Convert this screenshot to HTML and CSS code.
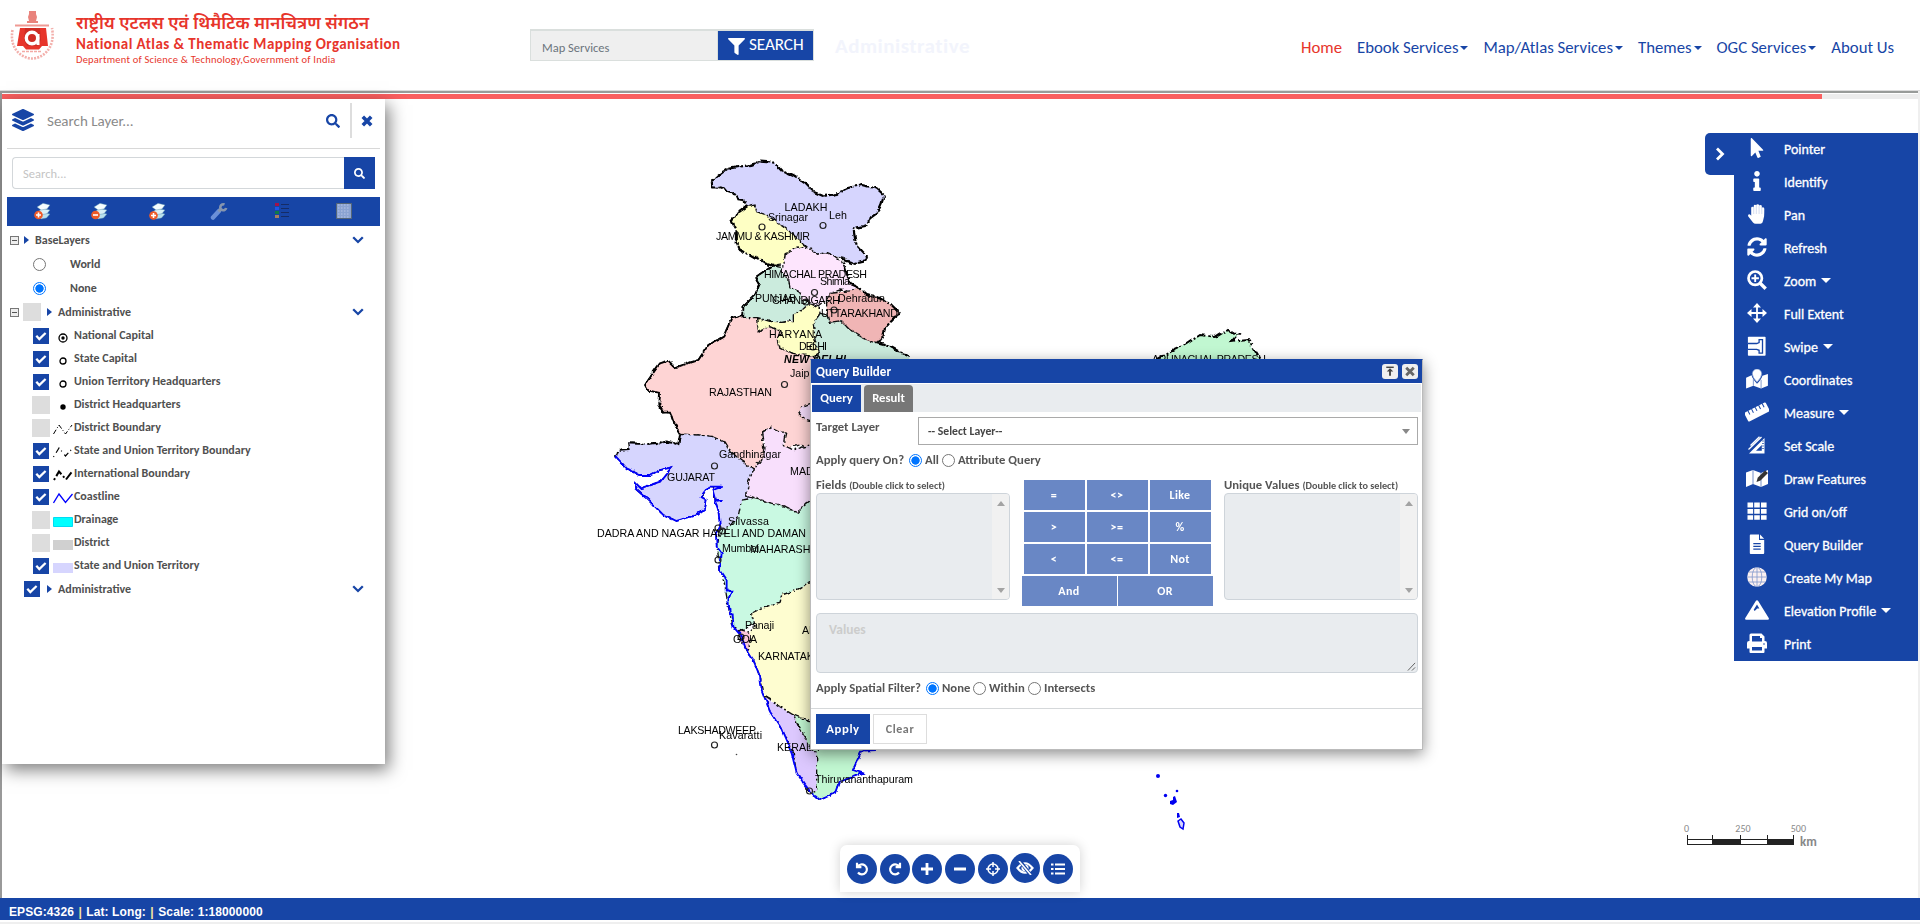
FILE: index.html
```html
<!DOCTYPE html>
<html lang="en">
<head>
<meta charset="utf-8">
<title>National Atlas &amp; Thematic Mapping Organisation</title>
<link rel="stylesheet" href="styles.css">
</head>
<body>
<svg class="defs" aria-hidden="true">
  <symbol id="i-search" viewBox="0 0 512 512"><path d="M505 442.7L405.3 343c-4.5-4.5-10.6-7-17-7H372c27.6-35.3 44-79.7 44-128C416 93.1 322.9 0 208 0S0 93.1 0 208s93.1 208 208 208c48.3 0 92.7-16.4 128-44v16.3c0 6.4 2.5 12.5 7 17l99.7 99.7c9.4 9.4 24.6 9.4 33.9 0l28.3-28.3c9.4-9.4 9.4-24.6.1-34zM208 336c-70.7 0-128-57.2-128-128 0-70.7 57.2-128 128-128 70.7 0 128 57.2 128 128 0 70.7-57.2 128-128 128z"/></symbol>
  <symbol id="i-filter" viewBox="0 0 512 512"><path d="M487.976 0H24.028C2.71 0-8.047 25.866 7.058 40.971L192 225.941V432c0 7.831 3.821 15.17 10.237 19.662l80 55.98C298.02 518.69 320 507.493 320 487.98V225.941l184.947-184.97C520.021 25.896 509.338 0 487.976 0z"/></symbol>
  <symbol id="i-layers" viewBox="0 0 512 512"><path d="M12.41 148.02l232.94 105.67c6.8 3.09 14.49 3.09 21.29 0l232.94-105.67c16.55-7.51 16.55-32.52 0-40.03L266.65 2.31a25.607 25.607 0 0 0-21.29 0L12.41 107.98c-16.55 7.51-16.55 32.53 0 40.04zm487.18 88.28l-58.09-26.33-161.64 73.27c-7.56 3.43-15.59 5.17-23.86 5.17s-16.29-1.74-23.86-5.17L70.51 209.97l-58.1 26.33c-16.55 7.5-16.55 32.5 0 40l232.94 105.59c6.8 3.08 14.49 3.08 21.29 0L499.59 276.3c16.55-7.5 16.55-32.5 0-40zm0 127.8l-57.87-26.23-161.86 73.37c-7.56 3.43-15.59 5.17-23.86 5.17s-16.29-1.74-23.86-5.17L70.29 337.87 12.41 364.1c-16.55 7.5-16.55 32.5 0 40l232.94 105.59c6.8 3.08 14.49 3.08 21.29 0L499.59 404.1c16.55-7.5 16.55-32.5 0-40z"/></symbol>
  <symbol id="i-pointer" viewBox="-96 0 512 512"><path d="M302.189 329.126H196.105l55.831 135.993c3.889 9.428-.555 19.999-9.444 23.999l-49.165 21.427c-9.165 4-19.443-.571-23.332-9.714l-53.053-129.136-86.664 89.138C18.729 472.71 0 463.554 0 447.977V18.299C0 1.899 19.921-6.096 30.277 5.443l284.412 292.542c11.472 11.179 3.007 31.141-12.5 31.141z"/></symbol>
  <symbol id="i-info" viewBox="-160 0 512 512"><path d="M20 424.229h20V279.771H20c-11.046 0-20-8.954-20-20V212c0-11.046 8.954-20 20-20h112c11.046 0 20 8.954 20 20v212.229h20c11.046 0 20 8.954 20 20V492c0 11.046-8.954 20-20 20H20c-11.046 0-20-8.954-20-20v-47.771c0-11.046 8.954-20 20-20zM96 0C56.235 0 24 32.235 24 72s32.235 72 72 72 72-32.235 72-72S135.764 0 96 0z"/></symbol>
  <symbol id="i-hand" viewBox="0 0 20 20"><path d="M4.2 4q0-1.3 1.2-1.3T6.7 4V2.2Q6.7.8 8 .8q1 0 1.2.7Q9.300 .2 10.700 .2 12 .2 12.200 1.500 12.600 .900 13.500 .900q1.300 0 1.300 1.400v1.500q.4-.5 1.200-.500 1.300.1 1.300 1.400 0 5-.2 7.500L16 17q-.5 2.800-2.500 2.800H8.700Q7 19.800 6 18.400L1.300 12.500Q.6 11.400 1.500 10.600q1-.7 1.900.2l.8.900z"/><path d="M6.700 4v6M9.300 2v8M12.100 2v8M14.800 3.500V10" stroke="#b7c6e6" stroke-width=".6"/></symbol>
  <symbol id="i-sync" viewBox="0 0 512 512"><path d="M370.72 133.28C339.458 104.008 298.888 87.962 255.848 88c-77.458.068-144.328 53.178-162.791 126.85-1.344 5.363-6.122 9.15-11.651 9.15H24.103c-7.498 0-13.194-6.807-11.807-14.176C33.933 94.924 134.813 8 256 8c66.448 0 126.791 26.136 171.315 68.685L463.03 40.97C478.149 25.851 504 36.559 504 57.941V192c0 13.255-10.745 24-24 24H345.941c-21.382 0-32.09-25.851-16.971-40.971l41.75-41.749zM32 296h134.059c21.382 0 32.09 25.851 16.971 40.971l-41.75 41.75c31.262 29.273 71.835 45.319 114.876 45.28 77.418-.07 144.315-53.144 162.787-126.849 1.344-5.363 6.122-9.15 11.651-9.15h57.304c7.498 0 13.194 6.807 11.807 14.176C478.067 417.076 377.187 504 256 504c-66.448 0-126.791-26.136-171.315-68.685L48.97 471.03C33.851 486.149 8 475.441 8 454.059V320c0-13.255 10.745-24 24-24z"/></symbol>
  <symbol id="i-zoom" viewBox="0 0 20 20"><g fill="none" stroke="#fff"><circle cx="8.200" cy="8.200" r="6.700" stroke-width="2.700"/><path d="M13.200 13.200l5.500 5.500" stroke-width="3.400"/><path d="M8.200 4.500v7.400M4.500 8.200h7.400" stroke-width="1.900"/></g></symbol>
  <symbol id="i-move" viewBox="0 0 20 20"><path d="M10 0l4 4.500h-3.100v4.600h4.600V6L20 10l-4.500 4v-3.100h-4.600v4.600H14L10 20l-4-4.500h3.100v-4.600H4.500V14L0 10l4.500-4v3.100h4.600V4.500H6z"/></symbol>
  <symbol id="i-swipe" viewBox="0 0 20 20"><rect x=".9" y=".8" width="17.700" height="19" rx=".8"/><path d="M.5 7.500h9.200l2.400-1V3.700h3.400v13.400h-3.400v-2.800l-2.400-1H.5" fill="#fff" stroke="#1745a6" stroke-width="1.300"/><path d="M0 7.500v6" stroke="#1745a6" stroke-width="2"/></symbol>
  <symbol id="i-pinmap" viewBox="0 0 24 22"><path d="M0 9.500L6 7q1 4 6 9.300Q17 11.500 18 7.500L24 5.500V18.500L16.500 21.500 8 18.500 0 21.500z"/><path d="M8 11v7.500M16.500 12v9" stroke="#7490c9"/><path d="M12 0a5.200 5.200 0 0 1 5.200 5.200Q17.200 9 12 14.500 6.800 9 6.800 5.200A5.200 5.200 0 0 1 12 0z" stroke="#7490c9" stroke-width=".7"/></symbol>
  <symbol id="i-ruler" viewBox="0 0 24 20"><g transform="rotate(-27 12 10)"><path fill-rule="evenodd" d="M1 5h22q1 0 1 1v8q0 1-1 1H1q-1 0-1-1V6q0-1 1-1zM4 5v4h1V5zm4 0v4h1V5zm4 0v4h1V5zm4 0v4h1V5zm4 0v4h1V5z"/></g></symbol>
  <symbol id="i-setsq" viewBox="0 0 20 20"><path fill-rule="evenodd" d="M17.500 3v15.500H2zM14.800 10v5.800H9z"/><path d="M1.500 14.500L14.500 2M3.500 10.500l9-8.700" stroke="#fff" stroke-width="1.300"/><path d="M17 6h-2M17 8.500h-2M17 11h-2M17 13.500h-2" stroke="#1745a6" stroke-width=".7"/></symbol>
  <symbol id="i-drawmap" viewBox="0 0 24 20"><path d="M1 4.500L8 2l8 3 7-3v14l-7 3-8-3-7 3z"/><path d="M8 2v14M16 5v14" stroke="#7490c9"/><path d="M11.500 14l1.200-4.200L20 2.500l3 2.600-7.500 7.400z" fill="#333"/></symbol>
  <symbol id="i-grid" viewBox="0 0 20 20"><path d="M.5 1.500h5.600v5H.5zM7.200 1.500h5.600v5H7.200zM14 1.500h5.600v5H14zM.5 8h5.600v4.800H.5zM7.200 8h5.600v4.800H7.200zM14 8h5.600v4.800H14zM.5 14.200h5.600v4.600H.5zM7.200 14.200h5.600v4.600H7.200zM14 14.200h5.600v4.600H14z"/></symbol>
  <symbol id="i-file" viewBox="0 0 20 20"><path fill-rule="evenodd" d="M3.500.5H12V6h5.200v13q0 1-.9 1H3.700q-.9 0-.9-1V1.500q0-1 .7-1zM6.300 9v1.200h7.400V9zm0 2.800V13h7.400v-1.200zm0 2.800v1.200h7.400v-1.200z"/><path d="M13 .5l4.200 4.300H13z"/></symbol>
  <symbol id="i-globe" viewBox="0 0 20 20"><circle cx="10" cy="10" r="9.800" fill="#fbf0f0"/><g fill="none" stroke="#8298cc" stroke-width=".8"><ellipse cx="10" cy="10" rx="4.800" ry="9.800"/><path d="M10 0v20M0 10h20M1.500 5h17M1.500 15h17"/></g></symbol>
  <symbol id="i-peak" viewBox="0 0 24 20"><path fill-rule="evenodd" d="M12 .3q.8 0 1.200.8l10.500 17q.8 1.600-1 1.600H1.300q-1.800 0-1-1.600l10.500-17q.4-.8 1.200-.8zM12 4.500L8.700 9.700l1 1.200 2.500-2.400h2.200z"/></symbol>
  <symbol id="i-print" viewBox="0 0 20 20"><path fill-rule="evenodd" d="M2.500 8V2q0-1.500 1.500-1.500h10.500L17.500 3.500V8h.5q2 0 2 2v5.500h-2.500V19q0 1-1 1H3.500q-1 0-1-1v-3.500H0V10q0-2 2-2zM5 3v5.500h10V5h-2V3zM5 14v3.500h10V14z"/><circle cx="17" cy="11" r=".8" fill="#1745a6"/></symbol>
  <symbol id="i-stack" viewBox="0 0 18 18"><g stroke="#4b88a8" stroke-width=".4"><path d="M4 14l5-3.500 7 1.500-3.500 4L7 17z" fill="#b9e0ee"/><path d="M3.500 10l5-3.500 7.500 1.500-3 3.700-5.500 1z" fill="#d9f0f7"/><path d="M3 5L9 1.300l7 1.600-3 4L7 8z" fill="#f6fdfe"/></g></symbol>
  <symbol id="i-chev" viewBox="0 0 12 8"><path d="M1.200 1.300L6 6l4.800-4.700" fill="none" stroke="#1745a6" stroke-width="2.300"/></symbol>
  <symbol id="i-tick" viewBox="0 0 16 16"><path d="M3.300 7.800l3 3.200 6.300-6" fill="none" stroke="#fff" stroke-width="2.300"/></symbol>
</svg>

<header class="top">
  <svg class="emblem" viewBox="0 0 46 52">
    <g fill="#e9837c"><path d="M19 1h7v3l1 3-1 4h2v2H17v-2h2l-1-4 1-3z"/></g>
    <path d="M5 15.500h34" stroke="#ef9a94" stroke-width="2"/>
    <path d="M10 18h26l2 18h-6l-3 3.500H16L13 36H7z" fill="#e7352b"/>
    <path d="M15 18h15l1 12-3 6H17l-3-6z" fill="#cf2c24"/>
    <circle cx="22" cy="28" r="5.700" fill="none" stroke="#fff" stroke-width="3.400"/><path d="M28 24v11" stroke="#fff" stroke-width="3"/>
    <path d="M2.500 20C-1 40 13 48.500 22 48.500S46 40 42 18" fill="none" stroke="#f3b0ac" stroke-width="2.600" stroke-dasharray="2 1.200"/>
    <path d="M12 41.500h20" stroke="#f3aaa5" stroke-width="1.500" stroke-dasharray="3 1"/>
  </svg>
  <div class="brand">
    <div class="brand-hi" lang="hi">राष्ट्रीय एटलस एवं थिमैटिक मानचित्रण संगठन</div>
    <div class="brand-en">National Atlas &amp; Thematic Mapping Organisation</div>
    <div class="brand-sub">Department of Science &amp; Technology,Government of India</div>
  </div>
  <div class="site-search"><span class="site-field">Map Services</span><span class="site-btn"><svg><use href="#i-filter"/></svg>SEARCH</span></div>
  <div class="ticker">Administrative</div>
  <nav class="nav"><a class="on">Home</a><a class="dd">Ebook Services</a><a class="dd">Map/Atlas Services</a><a class="dd">Themes</a><a class="dd">OGC Services</a><a>About Us</a></nav>
</header>

<main class="stage">
  <div class="progress"><div class="progress-fill"></div></div>
  <svg class="map" viewBox="0 0 1920 800">
    <defs><filter id="rough" x="-5%" y="-5%" width="110%" height="110%"><feTurbulence type="fractalNoise" baseFrequency=".11" numOctaves="3" seed="4"/><feDisplacementMap in="SourceGraphic" scale="4.500" xChannelSelector="R" yChannelSelector="G"/></filter></defs>
    <g transform="translate(0 -98)">
    <g filter="url(#rough)">
      <g transform="translate(580 140) scale(.33333)" class="land">
        <path fill="#fed4d4" d="M490 525L530 533 535 575 570 560 605 575 595 600 600 625 640 640 700 650 760 700V940L660 915 610 925 620 880 570 865 545 880 555 950 530 970V985L520 990 480 960 450 930 435 905 400 890 360 885 300 882 280 845 270 815H250L238 795 240 758 205 752 195 735 215 705 240 670 265 662 285 682 355 660 385 615 430 590 455 535z"/>
        <path fill="#cbebdd" d="M720 520L745 525 748 550 785 545 810 570 850 595 893 610 930 620 985 650V700H700L715 640 700 600V550z"/>
        <path fill="#feffc4" d="M690 492L718 505 720 520 700 550 705 600 715 640 700 650 640 640 600 625 595 600 605 575 570 560 535 575 530 535 575 548 640 545V520z"/>
        <path fill="#cbebdd" d="M580 375L605 380V395L625 415 630 440 650 445 668 455 665 480 690 490 670 510 640 522V540L605 547 575 545 530 533 490 532V500L525 465 540 430 528 410z"/>
        <path fill="#fde5fd" d="M615 345L640 328 675 318 712 342 740 338 765 350 785 365 800 400 812 430 828 438 815 455 780 450 750 460 740 480 715 500 690 490 665 475 650 445 630 440 625 415 605 395z"/>
        <path fill="#f0b5b5" d="M750 460L815 452 830 438 860 465 900 475 935 495 958 518 935 540 915 560 910 590 893 610 850 595 810 570 785 545 748 550 740 520V490z"/>
        <path fill="#feffc4" d="M500 200L525 195 530 215 560 225 590 245 620 268 650 290 675 320 640 328 615 345 612 370 580 375 540 362 510 345 475 328 468 300 470 270 455 240 475 218z"/>
        <path fill="#d6d5fe" d="M398 120L440 88 480 80 510 75 540 65 585 68 610 95 640 108 675 130 700 155 730 168 770 162 800 145 845 135 890 145 912 165 905 190 893 218 870 235 855 258 820 265 825 295 830 315 862 350 850 365 822 372 790 355 765 350 740 338 712 342 680 320 650 290 620 268 590 245 560 225 530 215 525 195 500 200 490 180 475 178 470 165 440 155 430 143 400 142z"/>
        <path class="intl" d="M580 375L540 362 510 345 475 328 468 300 470 270 455 240 475 218 500 200 490 180 475 178 470 165 440 155 430 143 400 142 398 120 440 88 480 80 510 75 540 65 585 68 610 95 640 108 675 130 700 155 730 168 770 162 800 145 845 135 890 145 912 165 905 190 893 218 870 235 855 258 820 265 825 295 830 315 862 350 850 365 822 372 790 360 800 400 812 430 830 438 860 465 900 475 935 495 958 518 935 540 915 560 910 590 893 610 930 620 985 650"/>
        <path class="intl solid" d="M580 375L528 410 540 430 525 465 490 500V525L455 535 430 590 385 615 355 660 285 682 265 662 240 670 215 705 195 735 205 752 240 758 238 795 250 815H270L280 845 300 882"/>
        <path fill="#f5dcfb" d="M692 790L665 800 658 825 670 835 700 845"/>
      </g>
      <g transform="translate(580 420) scale(.33333)" class="land">
        <path fill="#f8dffc" d="M548 40L575 20 615 40 610 75 640 90 690 75H740V245H690L650 278 610 258 560 245 500 225 505 185 520 150 550 110 555 85z"/>
        <path fill="#d6d5fe" d="M300 43L360 45 400 50 432 65 450 95 480 120 520 150 505 185 500 225 520 235 485 240 490 265 475 300 450 330 420 330 415 270 405 240 400 200 385 200 365 230 380 240 375 265 350 285 290 303 250 285 210 245 165 205V190L180 205 240 185 275 142 240 150 210 165 180 165 140 145 108 110 115 92 145 90 150 70 200 72 260 65 295 72z"/>
        <path fill="#c9f9e2" d="M485 240L520 235 560 245 610 258 650 278 690 245H730V485H690L650 510 605 525 600 550 560 560 515 580 520 610 490 635 460 620 445 560 435 500 420 450 410 370 420 330 455 315 475 290z"/>
        <path fill="#fefdd0" d="M515 580L560 560 600 550 605 525 650 510 690 485H740V900H690L640 890 600 855 555 830 540 770 520 720 500 690 505 640 525 620z"/>
        <path fill="#fbc6da" d="M475 632L510 640 507 690 485 670z"/>
        <path fill="#c1f7d1" d="M640 885L690 905H780V980L885 993 843 995 819 1050 849 1060 777 1086 765 1119 720 1140 680 1110 700 1000z"/>
        <path fill="#dcc8fe" d="M555 830L600 860 640 885 660 930 680 960 690 985 710 1000V1110L690 1115 650 1060 640 1000 600 920 570 875z"/>
        <path class="intl" d="M300 43L295 72 260 65 200 72 150 70 145 90 115 92 108 110"/>
        <path class="coast" d="M108 110L140 145 180 165 210 165 240 150 275 142 240 185 180 205 165 190V205L210 245 250 285 290 303 350 285 375 265 380 240 362 230 385 200H425L400 210 408 240H425L405 243 415 270 420 320 408 345 410 380 425 400 420 450 440 480 440 512H455L445 540 450 580H458L460 620 485 650 495 680 520 720 540 770 545 810 570 875 600 920 635 1000 650 1060 690 1115 720 1140 765 1119 777 1086 849 1060 819 1050 843 995 885 993"/>
      </g>
      <path fill="#c1f7d1" d="M1155 360L1170 352 1185 345 1200 335 1215 337 1228 329 1238 335 1232 342 1248 340 1262 362z"/>
      <path class="intl full" d="M1155 360L1170 352 1185 345 1200 335 1215 337 1228 329 1238 335 1232 342 1248 340 1262 362"/>
    </g>
    <g fill="#0000f0"><circle cx="1158" cy="776" r="2"/><circle cx="1165.500" cy="795.500" r="1.700"/><circle cx="1177" cy="791" r="1.300"/><path d="M1173 797l2-1 2 6-4 3-3-1 0-3 3-1z"/><path d="M1177 813l2 0 1 4-3 1z"/></g>
    <path d="M1178 821l3-2 3 4-1 6-3-2z" fill="#d6d5fe" stroke="#0000f0" stroke-width="1.500"/>
    <g class="town">
      <circle cx="762" cy="227" r="3"/><circle cx="823" cy="225.500" r="3"/><circle cx="814.500" cy="292.500" r="3"/><circle cx="806" cy="302" r="3"/><circle cx="834" cy="310" r="3"/><circle cx="784.500" cy="384.500" r="3"/><circle cx="714.500" cy="466" r="3"/><circle cx="718" cy="528" r="3"/><circle cx="722.500" cy="531" r="3"/><circle cx="718" cy="560" r="3"/><circle cx="741" cy="637" r="3"/><circle cx="714.500" cy="745" r="3"/><circle cx="809.500" cy="791" r="3"/><circle cx="813" cy="347" r="3" fill="#4652a0"/>
    </g>
    <g class="lbl">
      <text x="784.500" y="211" textLength="43">LADAKH</text><text x="768" y="221" textLength="40">Srinagar</text><text x="829" y="219" textLength="18">Leh</text>
      <text x="716" y="240" textLength="94">JAMMU &amp; KASHMIR</text><text x="764" y="278" textLength="103">HIMACHAL PRADESH</text><text x="820" y="285" textLength="30">Shimla</text>
      <text x="755" y="302" textLength="41">PUNJAB</text><text x="772" y="303.500" textLength="68">CHANDIGARH</text><text x="838" y="302" textLength="47">Dehradun</text><text x="821" y="317" textLength="77">UTTARAKHAND</text>
      <text x="769" y="338" textLength="53">HARYANA</text><text x="799" y="350" textLength="28">DELHI</text><text class="capital" x="784" y="363" textLength="62">NEW DELHI</text>
      <text x="790" y="377">Jaipur</text><text x="709" y="396" textLength="63">RAJASTHAN</text><text x="719" y="458" textLength="62">Gandhinagar</text><text x="667" y="481" textLength="48">GUJARAT</text>
      <text x="790" y="475">MADHYA</text><text x="728" y="525" textLength="41">Silvassa</text><text x="597" y="537" textLength="209">DADRA AND NAGAR HAVELI AND DAMAN</text>
      <text x="722" y="552" textLength="37">Mumbai</text><text x="750" y="553">MAHARASHTRA</text><text x="745" y="629" textLength="29">Panaji</text><text x="733" y="643" textLength="24">GOA</text>
      <text x="802" y="634">ANDHRA</text><text x="758" y="660">KARNATAKA</text><text x="678" y="734" textLength="78">LAKSHADWEEP</text><text x="719" y="739" textLength="43">Kavaratti</text>
      <text x="777" y="751">KERALA</text><text x="815" y="783" textLength="98">Thiruvananthapuram</text><text x="1152" y="363" textLength="114">ARUNACHAL PRADESH</text>
    </g>
    <circle cx="736.500" cy="754.500" r=".8" fill="#444"/>
    </g>
  </svg>

  <aside class="layers">
    <div class="layers-head"><svg class="lg"><use href="#i-layers"/></svg><span>Search Layer...</span><svg class="mag"><use href="#i-search"/></svg><i></i><svg class="x" viewBox="0 0 10 10"><path d="M1.500 1.500l7 7M8.500 1.500l-7 7" stroke="#1745a6" stroke-width="3"/></svg></div>
    <div class="layers-find"><span>Search...</span><b><svg><use href="#i-search"/></svg></b></div>
    <div class="layers-tools">
      <svg viewBox="0 0 18 18"><use href="#i-stack"/><circle cx="4.500" cy="13" r="4.300" fill="#ee5a28"/><path d="M4.500 10.500v5M2 13h5" stroke="#fff" stroke-width="1.600"/></svg>
      <svg viewBox="0 0 18 18"><use href="#i-stack"/><circle cx="4.500" cy="13" r="4.300" fill="#ee5a28"/><path d="M2 13h5" stroke="#fff" stroke-width="1.600"/></svg>
      <svg viewBox="0 0 18 18"><use href="#i-stack"/><circle cx="4.500" cy="13.500" r="4.300" fill="#ee5a28"/><path d="M4.500 11v5M2 13.500h5" stroke="#fff" stroke-width="1.600"/></svg>
      <svg viewBox="0 0 18 18"><path d="M3 15.500L9 9" stroke="#6b90d8" stroke-width="4.500" stroke-linecap="round"/><path d="M8.500 9.500l3-3" stroke="#8795ae" stroke-width="3"/><path d="M14.500 2.500a3 3 0 1 0 1.700 3.500" fill="none" stroke="#8795ae" stroke-width="2.600"/></svg>
      <svg viewBox="0 0 18 18"><path d="M2 1h4v3H2z" fill="#a3134a"/><path d="M2 5h4v3H2z" fill="#1d56e8"/><path d="M2 9h4v3H2z" fill="#0e7a4a"/><path d="M2 13h4v3H2z" fill="#a8805e"/><path d="M8 2.500h8M8 6.500h8M8 10.500h8M8 14.500h8" stroke="#152c66"/></svg>
      <svg viewBox="0 0 18 18"><path d="M1.500 1.500h15v15h-15z" fill="#8aa3d2" stroke="#567" stroke-width="1"/><path d="M3 3h12M3 6h12M3 9h12M3 12h12M3 15h12" stroke="#a9bbdf" stroke-dasharray="1.500 1.500" stroke-width="1.500"/></svg>
    </div>
    <div class="tree">
      <div class="grp"><em></em><s></s><span>BaseLayers</span><svg><use href="#i-chev"/></svg></div>
      <div class="base"><u></u><span>World</span></div>
      <div class="base"><u class="sel"></u><span>None</span></div>
      <div class="grp"><em></em><q class="off"></q><s></s><span>Administrative</span><svg><use href="#i-chev"/></svg></div>
      <div class="leaf"><q><svg><use href="#i-tick"/></svg></q><svg class="sym" viewBox="0 0 20 12"><circle cx="10" cy="7" r="4" fill="none" stroke="#000" stroke-width="1.300"/><circle cx="10" cy="7" r="1.700"/></svg><span>National Capital</span></div>
      <div class="leaf"><q><svg><use href="#i-tick"/></svg></q><svg class="sym" viewBox="0 0 20 12"><circle cx="10" cy="7" r="3" fill="none" stroke="#000" stroke-width="1.300"/></svg><span>State Capital</span></div>
      <div class="leaf"><q><svg><use href="#i-tick"/></svg></q><svg class="sym" viewBox="0 0 20 12"><circle cx="10" cy="7" r="3" fill="none" stroke="#000" stroke-width="1.300"/></svg><span>Union Territory Headquarters</span></div>
      <div class="leaf"><q class="off"></q><svg class="sym" viewBox="0 0 20 12"><circle cx="10" cy="7" r="2.700"/></svg><span>District Headquarters</span></div>
      <div class="leaf"><q class="off"></q><svg class="sym" viewBox="0 0 20 12"><path d="M.5 11L6 2l6.500 9L19 2" fill="none" stroke="#000" stroke-dasharray="5 2 1 2"/></svg><span>District Boundary</span></div>
      <div class="leaf"><q><svg><use href="#i-tick"/></svg></q><svg class="sym" viewBox="0 0 20 12"><path d="M.5 11L6 2l6.500 8L19 3" fill="none" stroke="#000" stroke-width="1.200" stroke-dasharray="1 4 6 3"/></svg><span>State and Union Territory Boundary</span></div>
      <div class="leaf"><q><svg><use href="#i-tick"/></svg></q><svg class="sym" viewBox="0 0 20 12"><path d="M1 11L6 2.500l7 8L19.500 2" fill="none" stroke="#000" stroke-width="2" stroke-dasharray="2 2.500 9 2.500"/></svg><span>International Boundary</span></div>
      <div class="leaf"><q><svg><use href="#i-tick"/></svg></q><svg class="sym" viewBox="0 0 20 12"><path d="M.5 11L6 2l6.500 8.500L19.500 2" fill="none" stroke="#0000ff" stroke-width="1.300"/></svg><span>Coastline</span></div>
      <div class="leaf"><q class="off"></q><svg class="sym" viewBox="0 0 20 12"><path d="M.5 2.500h19v9H.5z" fill="#0ff" stroke="#00dcf4"/></svg><span>Drainage</span></div>
      <div class="leaf"><q class="off"></q><svg class="sym" viewBox="0 0 20 12"><path d="M0 2h20v10H0z" fill="#d0d0d0"/></svg><span>District</span></div>
      <div class="leaf"><q><svg><use href="#i-tick"/></svg></q><svg class="sym" viewBox="0 0 20 12"><path d="M0 2h20v10H0z" fill="#d6d5fe"/></svg><span>State and Union Territory</span></div>
      <div class="grp"><em class="none"></em><q class="on"><svg><use href="#i-tick"/></svg></q><s></s><span>Administrative</span><svg><use href="#i-chev"/></svg></div>
    </div>
  </aside>

  <section class="dialog">
    <div class="dlg-title"><span>Query Builder</span><b><svg viewBox="0 0 16 16"><path d="M4 3.500h8" stroke="#444" stroke-width="1.500"/><path d="M8 4.500l3.500 3.500H9v4.500H7V8H4.500z" fill="#444"/></svg></b><b><svg viewBox="0 0 16 16"><path d="M4 4l8 8M12 4l-8 8" stroke="#666" stroke-width="3"/></svg></b></div>
    <div class="dlg-tabs"><span class="act">Query</span><span>Result</span></div>
    <div class="dlg-target"><span>Target Layer</span><div class="select"><span>-- Select Layer--</span></div></div>
    <div class="opts"><span class="w90">Apply query On?</span><u class="sel"></u><span class="w14">All</span><u></u><span>Attribute Query</span></div>
    <div class="cols">
      <div class="col"><div class="cap">Fields <small>(Double click to select)</small></div><div class="list"><i><s></s><s></s></i></div></div>
      <div class="ops"><div class="g3"><b>=</b><b>&lt;&gt;</b><b>Like</b><b>&gt;</b><b>&gt;=</b><b>%</b><b>&lt;</b><b>&lt;=</b><b>Not</b></div><div class="g2"><b>And</b><b>OR</b></div></div>
      <div class="col"><div class="cap">Unique Values <small>(Double click to select)</small></div><div class="list"><i><s></s><s></s></i></div></div>
    </div>
    <div class="area"><span>Values</span><svg viewBox="0 0 10 10"><path d="M1 9.500L9 1M5.500 9.500L9 6" stroke="#555"/></svg></div>
    <div class="opts sp"><span class="w107">Apply Spatial Filter?</span><u class="sel"></u><span class="w29">None</span><u></u><span class="w37">Within</span><u></u><span>Intersects</span></div>
    <div class="dlg-foot"><b>Apply</b><b class="ghost">Clear</b></div>
  </section>

  <aside class="tools">
    <div class="tab"><svg viewBox="0 0 10 14"><path d="M2 1.500L7.500 7 2 12.500" fill="none" stroke="#fff" stroke-width="2.800"/></svg></div>
    <ul>
      <li><svg><use href="#i-pointer"/></svg>Pointer</li><li><svg><use href="#i-info"/></svg>Identify</li><li><svg><use href="#i-hand"/></svg>Pan</li><li><svg><use href="#i-sync"/></svg>Refresh</li>
      <li class="dd"><svg><use href="#i-zoom"/></svg>Zoom</li><li><svg><use href="#i-move"/></svg>Full Extent</li><li class="dd"><svg><use href="#i-swipe"/></svg>Swipe</li><li><svg class="wide"><use href="#i-pinmap"/></svg>Coordinates</li>
      <li class="dd"><svg class="wide"><use href="#i-ruler"/></svg>Measure</li><li><svg><use href="#i-setsq"/></svg>Set Scale</li><li><svg class="wide"><use href="#i-drawmap"/></svg>Draw Features</li><li><svg><use href="#i-grid"/></svg>Grid on/off</li>
      <li><svg><use href="#i-file"/></svg>Query Builder</li><li><svg><use href="#i-globe"/></svg>Create My Map</li><li class="dd"><svg class="wide"><use href="#i-peak"/></svg>Elevation Profile</li><li><svg><use href="#i-print"/></svg>Print</li>
    </ul>
  </aside>

  <div class="scale">
    <div class="nums"><span>0</span><span>250</span><span>500</span></div>
    <div class="barline"><svg viewBox="0 0 107 11"><path d="M.5 0v10M25.500 0v10M53.500 0v10M80.500 0v10M106.500 0v10M0 4.500h107M0 9.500h107" stroke="#222"/><path d="M25 4.500h28v5H25zM80 4.500h27v5H80z" fill="#222"/></svg><b>km</b></div>
  </div>

  <div class="dock">
    <b><svg viewBox="0 0 14 14"><path d="M2 .8v4.400h4.400M2.500 5A5 5 0 1 1 3 10.500"/></svg></b>
    <b><svg viewBox="0 0 14 14"><path d="M12 .8v4.400H7.600M11.500 5A5 5 0 1 0 11 10.500"/></svg></b>
    <b><svg viewBox="0 0 14 14"><path d="M7 1v12M1 7h12" stroke-width="2.800"/></svg></b>
    <b><svg viewBox="0 0 14 14"><path d="M1 7h12" stroke-width="3"/></svg></b>
    <b><svg viewBox="0 0 14 14"><circle cx="7" cy="7" r="5" stroke-width="1.500"/><path d="M7 0v5M7 9v5M0 7h5M9 7h5" stroke-width="1.500"/></svg></b>
    <b class="up"><svg class="eye" viewBox="0 0 18 14"><path d="M1.500 7Q9-2.500 16.500 7 9 16.500 1.500 7z"/><circle cx="9" cy="7" r="2.500"/><path d="M4 0l10.500 14" stroke="#1745a6" stroke-width="3.500"/><path d="M3 0l12 14" stroke-width="1.600"/></svg></b>
    <b><svg viewBox="0 0 14 14"><path d="M0 2.500h2.500M0 7h2.500M0 11.500h2.500M4 2.500h10M4 7h10M4 11.500h10"/></svg></b>
  </div>
</main>
<footer class="status">EPSG:4326 <i>|</i> Lat: Long: <i>|</i> Scale: 1:18000000</footer>
</body>
</html>
```
FILE: styles.css
```css
* { box-sizing: border-box; }
body { margin: 0; width: 1920px; height: 924px; overflow: hidden; background: #efefef; font-family: Carlito, Lato, "Noto Sans", sans-serif; color: #555; }
.defs { position: absolute; width: 0; height: 0; }
svg { display: block; fill: #fff; }

/* Header */
.top { height: 91px; background: #fff; border-bottom: 1px solid #ddd; display: flex; align-items: flex-start; padding-left: 10px; }
.emblem { width: 46px; height: 52px; margin: 10px 20px 0 0; flex: none; }
.brand { width: 454px; color: #e7352b; padding-top: 14px; white-space: nowrap; flex: none; }
.brand-hi { font: 600 17.500px/22px "Noto Sans Devanagari", "Noto Sans", sans-serif; height: 22px; }
.brand-en { font-weight: 700; font-size: 15px; line-height: 17px; letter-spacing: .44px; }
.brand-sub { font-size: 10.500px; line-height: 14px; letter-spacing: .22px; }
.site-search { display: flex; width: 284px; height: 32px; margin-top: 29px; border: 1px solid #dadfdd; border-top-width: 2px; flex: none; }
.site-field { width: 187px; background: #efefef; color: #6c757d; font-size: 12.500px; line-height: 33px; padding-left: 11px; border-right: 1px solid #dadfdd; }
.site-btn { flex: 1; background: #1745a6; color: #fff; font-size: 17.200px; line-height: 20px; letter-spacing: -.1px; display: flex; align-items: center; padding: 0 0 2px 10px; gap: 4px; }
.site-btn svg { width: 17px; height: 17px; margin-top: 4px; }
.ticker { margin: 33px 0 0 21px; width: 466px; flex: none; font-weight: 700; font-size: 21px; line-height: 26px; color: #f2f4fc; letter-spacing: .5px; }
.nav { display: flex; gap: 15px; margin-top: 36px; font-size: 16.750px; line-height: 22px; color: #1745a6; white-space: nowrap; }
.nav .on { color: #e7352b; }
.dd::after { content: ""; display: inline-block; border: 4px solid transparent; border-top-color: currentColor; border-bottom: 0; margin-left: 2px; vertical-align: 3px; }

/* Map stage */
.stage { position: relative; width: 1918px; height: 807px; background: #fff; border-top: 2px solid #989b99; border-left: 2px solid #999; padding-top: 1px; }
.progress { height: 5px; background: #ececec; }
.progress-fill { width: 1820px; height: 5px; background: #f95f5f; }
.map { position: absolute; left: -2px; top: 5px; width: 1920px; height: 800px; }
.land path { stroke: #111; stroke-width: 4; stroke-dasharray: 20 8 5 8; }
.land .intl { fill: none; stroke: #000; stroke-width: 6.500; stroke-dasharray: 30 6 6 6; }
.land .solid { stroke-dasharray: 60 3; stroke-width: 5.500; }
.intl.full { fill: none; stroke: #000; stroke-width: 2; stroke-dasharray: 10 2 2 2; }
.land .coast { fill: none; stroke: #0000fa; stroke-width: 5.500; stroke-dasharray: none; }
.town circle { fill: none; stroke: #222; stroke-width: 1.200; }
.lbl { font-family: "Liberation Sans", Arial, sans-serif; font-size: 10.670px; fill: #000; }
.lbl .capital { font-weight: 700; font-style: italic; }

/* Layer panel */
.layers { position: absolute; left: 0; top: 6px; width: 383px; height: 665px; background: #fff; box-shadow: 4px 6px 16px rgba(0,0,0,.5); padding: 0 5px; }
.layers-head { height: 50px; border-bottom: 1px solid #d8d8d8; display: flex; align-items: center; padding: 0 7px 4px 5px; }
.layers-head .lg { width: 22px; height: 22px; margin: -4px 13px 0 0; fill: #1745a6; }
.layers-head span { width: 279px; flex: none; font-size: 15px; color: #8a8a8a; margin-top: -2px; }
.layers-head .mag { width: 14px; height: 14px; fill: #1745a6; margin-top: -2px; flex: none; }
.layers-head i { width: 2px; height: 35px; background: #ddd; margin: -3px 9px 0 10px; flex: none; }
.layers-head .x { width: 12px; height: 12px; margin-top: -2px; flex: none; }
.layers-find { display: flex; margin: 8px 5px 0; height: 32px; width: 363px; }
.layers-find span { flex: 1; border: 1px solid #d3d7da; border-right: 0; border-radius: 4px 0 0 4px; font-size: 12.500px; line-height: 32px; padding-left: 10px; color: #c4c4c4; }
.layers-find b { width: 31px; background: #1745a6; display: flex; align-items: center; justify-content: center; }
.layers-find svg { width: 11px; height: 11px; }
.layers-tools { margin-top: 8px; height: 29px; background: #1745a6; display: grid; grid-template-columns: 57px 58px 57px 65px 62px 62px; padding-left: 7px; align-items: center; justify-items: center; }
.layers-tools svg { width: 18px; height: 18px; margin-top: -2px; }
.tree { padding: 2px 0 0 3px; font-weight: 700; font-size: 12px; color: #505050; }
.grp, .base, .leaf { display: flex; align-items: center; height: 24px; white-space: nowrap; }
.leaf { height: 23px; padding-left: 23px; }
.leaf span { line-height: 14px; margin-top: -1px; }
.grp em { width: 9px; height: 9px; border: 1px solid #777; background: linear-gradient(#555,#555) center / 5px 1px no-repeat, #eee; margin: 1px 5px 0 0; }
.grp em.none { visibility: hidden; }
.grp s { border: 4.500px solid transparent; border-left: 5.500px solid #1745a6; border-right: 0; margin-right: 6px; }
.grp span { flex: 1; }
.grp > svg { width: 12px; height: 8px; margin-right: 16px; }
q { quotes: none; width: 16px; height: 16px; background: #1745a6; margin: 0 4px 0 0; flex: none; }
q::before, q::after { content: none; }
q svg { width: 16px; height: 16px; }
q.off { width: 18px; height: 18px; background: #ddd; }
.leaf q.off { margin: 0 3px 0 -1px; }
.grp q { margin: 0 6px 0 -1px; }
.grp q.on { margin: 0 7px 0 0; }
.sym { width: 20px; height: 12px; margin: 2px 1px 0 0; fill: #000; flex: none; }
.base { padding-left: 23px; }
.base span { margin-left: 24px; }
u { width: 13px; height: 13px; border: 1px solid #767676; border-radius: 50%; background: #fff; flex: none; }
u.sel { border-color: #0075ff; background: radial-gradient(circle, #0075ff 3.800px, #fff 4.500px); }

/* Query builder */
.dialog { position: absolute; left: 808px; top: 266px; width: 613px; height: 391px; background: #fff; border: 1px solid #bbb; border-top-color: #1745a6; box-shadow: 0 4px 14px rgba(0,0,0,.45); font-weight: 700; font-size: 12.700px; }
.dlg-title { height: 23px; background: #1745a6; color: #fff; display: flex; align-items: center; padding: 0 4px 1px 5px; gap: 4px; margin-bottom: 1px; font-size: 13px; }
.dlg-title span { flex: 1; }
.dlg-title b { width: 16px; height: 15px; background: #efefef; border-radius: 3px; }
.dlg-title svg { width: 16px; height: 15px; }
.dlg-tabs { height: 28px; background: #e9ecef; margin: 0 1px; display: flex; gap: 3px; padding-top: 1px; color: #fff; }
.dlg-tabs span { width: 49px; text-align: center; line-height: 26px; background: #777; border-radius: 4px 4px 0 0; }
.dlg-tabs .act { background: #1745a6; border-radius: 0; }
.dlg-target { display: flex; padding: 5px 4px 0 5px; height: 34px; }
.dlg-target > span { width: 102px; line-height: 19px; }
.select { flex: 1; border: 1px solid #aaa; height: 28px; padding: 0 7px 0 9px; font-size: 11.700px; display: flex; align-items: center; color: #444; }
.select span { flex: 1; }
.select::after { content: ""; border: 4px solid transparent; border-top: 5px solid #888; border-bottom: 0; }
.opts { display: flex; align-items: center; gap: 3px; padding-left: 5px; height: 28px; white-space: nowrap; line-height: 14px; }
.w90 { width: 90px; } .w14 { width: 14px; } .w107 { width: 107px; } .w29 { width: 28px; } .w37 { width: 36px; }
.cols { display: flex; justify-content: space-between; padding: 6px 4px 0 5px; height: 136px; }
.col { width: 194px; }
.cap { height: 13px; line-height: 10px; white-space: nowrap; }
.cap small { font-size: 10.200px; }
.list { height: 107px; background: #e9ecef; border: 1px solid #ced4da; border-radius: 4px; display: flex; justify-content: flex-end; overflow: hidden; }
.list i { width: 17px; background: #f1f1f1; display: flex; flex-direction: column; justify-content: space-between; align-items: center; padding: 7px 0 6px; }
.list s { border: 4px solid transparent; border-bottom: 5px solid #a3a3a3; border-top: 0; }
.list s:last-child { transform: rotate(180deg); }
.ops { width: 191px; }
.ops b { height: 30px; background: #6987c5; color: #fff; text-align: center; line-height: 30px; font-size: 12px; letter-spacing: .4px; }
.g3 { display: grid; grid-template-columns: repeat(3, 1fr); gap: 2px; margin: 0 2px 2px; }
.g2 { display: grid; grid-template-columns: 1fr 1fr; gap: 1px; }
.area { position: relative; height: 60px; margin: 3px 4px 0 5px; background: #e9ecef; border: 1px solid #ced4da; border-radius: 4px; padding: 9px 12px; font-size: 13.500px; line-height: 14px; color: #ccc; }
.area svg { position: absolute; right: 1px; bottom: 1px; width: 9px; height: 9px; }
.opts.sp { height: 30px; }
.dlg-foot { margin-top: 5px; border-top: 1px solid #d5d8da; padding: 5px; display: flex; gap: 3px; }
.dlg-foot b { width: 54px; height: 30px; background: #1745a6; color: #fff; text-align: center; line-height: 30px; letter-spacing: .6px; }
.dlg-foot .ghost { background: #fff; border: 1px solid #ddd; line-height: 28px; color: #777; font-size: 12px; }

/* Right tools */
.tools { position: absolute; right: 0; top: 40px; display: flex; align-items: flex-start; }
.tab { width: 29px; height: 42px; background: #1745a6; border-radius: 5px 0 0 5px; padding: 14px 0 0 10px; }
.tab svg { width: 10px; height: 14px; }
.tools ul { list-style: none; margin: 0; padding: 0; width: 184px; height: 528px; background: #1745a6; color: #fff; font-size: 14px; -webkit-text-stroke: .3px #fff; }
.tools li { height: 33px; display: flex; align-items: center; padding-left: 13px; white-space: nowrap; }
.tools li svg { width: 20px; height: 20px; margin: -4px 17px 0 0; flex: none; }
.tools li svg.wide { width: 24px; margin: -4px 15px 0 -2px; }
.tools .dd::after { border-width: 5px 5px 0; margin: -3px 0 0 5px; }

.scale { position: absolute; left: 1681px; top: 728px; color: #888; font-size: 10px; }
.nums { display: flex; width: 124px; height: 14px; line-height: 15px; justify-content: space-between; padding: 0 1px 0 1px; }
.nums span:nth-child(2) { margin-left: 6px; }
.barline { display: flex; gap: 6px; height: 11px; }
.barline svg { width: 107px; height: 11px; margin: 0 0 0 4px; }
.barline b { font-size: 13px; line-height: 14px; }

.dock { position: absolute; left: 838px; top: 752px; width: 240px; height: 47px; background: #fff; border-radius: 7px 7px 0 0; box-shadow: 0 0 12px rgba(0,0,0,.18); display: flex; align-items: center; justify-content: center; gap: 2.700px; }
.dock b { width: 30px; height: 30px; border-radius: 50%; background: #1745a6; display: flex; align-items: center; justify-content: center; }
.dock .up { margin-top: -2px; }
.dock svg { width: 14px; height: 14px; fill: none; stroke: #fff; stroke-width: 2.200; }
.dock .eye { width: 18px; }
.status { height: 22px; background: #1745a6; color: #fff; font: 700 12px/28px "Liberation Sans", Arial, sans-serif; letter-spacing: .1px; padding-left: 9px; white-space: pre; box-shadow: 0 2px #fff; }
.status i { font-style: normal; color: #f4e6a0; margin: 0 1px; }
```
